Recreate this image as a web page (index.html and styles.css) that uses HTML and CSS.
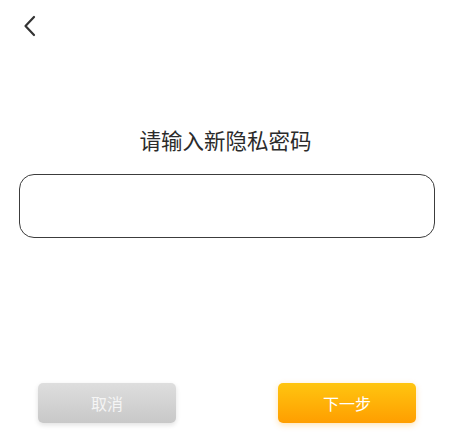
FILE: index.html
```html
<!DOCTYPE html>
<html lang="zh-CN">
<head>
<meta charset="utf-8">
<title>设置隐私密码</title>
<link rel="stylesheet" href="styles.css">
</head>
<body>
<div class="page">
  <div class="header">
    <button class="back" aria-label="返回">
      <svg width="14" height="22" viewBox="0 0 14 22"><path d="M11 2 L2.5 11 L11 20" fill="none" stroke="#333" stroke-width="2.2" stroke-linecap="round" stroke-linejoin="round"/></svg>
    </button>
  </div>
  <h1 class="title">请输入新隐私密码</h1>
  <input class="pwd" type="password">
  <div class="actions">
    <button class="btn btn-cancel">取消</button>
    <button class="btn btn-next">下一步</button>
  </div>
</div>
</body>
</html>
```
FILE: styles.css
```css
html, body {
  margin: 0;
  padding: 0;
  background: #fff;
  font-family: "Noto Sans CJK SC", "Noto Sans", sans-serif;
}
.page {
  display: flex;
  flex-direction: column;
  height: 440px;
}
.header {
  height: 51px;
  display: flex;
  align-items: center;
  padding-left: 23px;
}
.back {
  border: 0;
  background: none;
  padding: 0;
  display: flex;
}
.title {
  margin: 75px 0 0;
  font-size: 21.5px;
  line-height: 28px;
  font-weight: 400;
  color: #2b2b2b;
  text-align: center;
}
.pwd {
  box-sizing: border-box;
  margin: 20px 16px 0 19px;
  height: 64px;
  border: 1px solid #3c3c3c;
  border-radius: 15px;
  outline: none;
  background: #fff;
}
.actions {
  margin-top: auto;
  padding: 0 35px 17px 38px;
  display: flex;
  justify-content: space-between;
}
.btn {
  width: 138px;
  height: 40px;
  border: 0;
  border-radius: 5px;
  font-family: inherit;
  font-size: 16px;
  color: #fff;
}
.btn-cancel {
  background: linear-gradient(#dedede, #c8c8c8);
  color: #f5f5f5;
  box-shadow: 0 2px 5px rgba(0,0,0,0.12);
}
.btn-next {
  background: linear-gradient(#ffc510, #ff9e00);
  box-shadow: 0 2px 6px rgba(255,160,0,0.3);
}
```
